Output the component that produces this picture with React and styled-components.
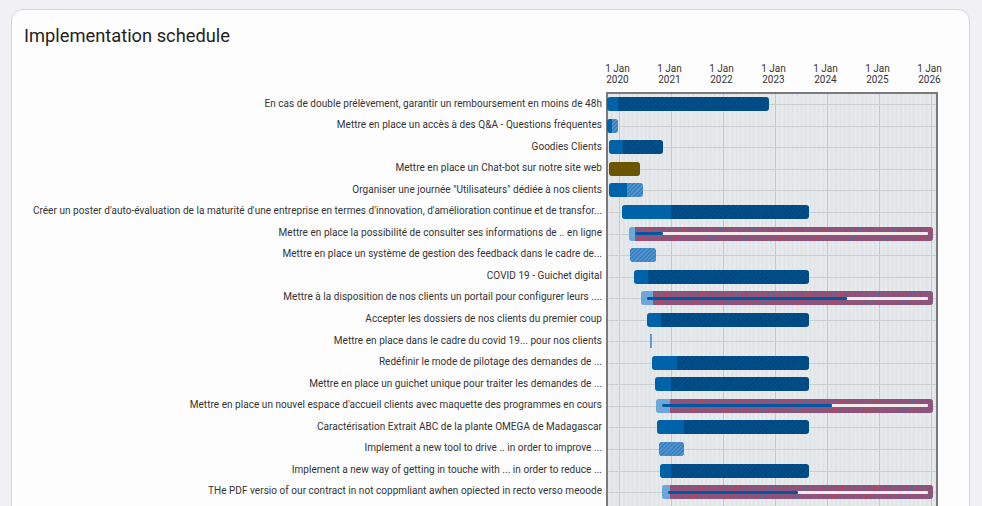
import React from 'react';
import styled, { createGlobalStyle } from 'styled-components';

const ROW_H = 21.55;
const PLOT_X = 608; // page x of the plot's inner left edge

const years = [2020, 2021, 2022, 2023, 2024, 2025, 2026];
const yearX = (i) => 10.5 + 52 * i;

// positions are page x coordinates of the bar parts
const tasks = [
  { label: 'En cas de double prélèvement, garantir un remboursement en moins de 48h', kind: 'blue', start: 607, split: 618.3, end: 769 },
  { label: 'Mettre en place un accès à des Q&A - Questions fréquentes', kind: 'blueLight', start: 607.3, split: 612.3, end: 617.7 },
  { label: 'Goodies Clients', kind: 'blue', start: 608.7, split: 622.7, end: 662.7 },
  { label: 'Mettre en place un Chat-bot sur notre site web', kind: 'olive', start: 608.7, end: 640.3 },
  { label: 'Organiser une journée "Utilisateurs" dédiée à nos clients', kind: 'blueLight', start: 609.3, split: 626.7, end: 643.3 },
  { label: "Créer un poster d'auto-évaluation de la maturité d'une entreprise en termes d'innovation, d'amélioration continue et de transfor...", kind: 'blue', start: 622, split: 670.7, end: 809.3 },
  { label: 'Mettre en place la possibilité de consulter ses informations de .. en ligne', kind: 'late', start: 628.7, split: 635, end: 933, progFrom: 635, progTo: 663.3, progEnd: 928 },
  { label: 'Mettre en place un système de gestion des feedback dans le cadre de...', kind: 'light', start: 630, end: 655.7 },
  { label: 'COVID 19 - Guichet digital', kind: 'blue', start: 634, split: 648, end: 809.3 },
  { label: 'Mettre à la disposition de nos clients un portail pour configurer leurs ....', kind: 'late', start: 640.7, split: 653.3, end: 933, progFrom: 646.7, progTo: 846.7, progEnd: 928.3 },
  { label: 'Accepter les dossiers de nos clients du premier coup', kind: 'blue', start: 647, split: 660.7, end: 809.3 },
  { label: 'Mettre en place dans le cadre du covid 19... pour nos clients', kind: 'mark', start: 650 },
  { label: 'Redéfinir le mode de pilotage des demandes de ...', kind: 'blue', start: 651.7, split: 677.3, end: 809.3 },
  { label: 'Mettre en place un guichet unique pour traiter les demandes de ...', kind: 'blue', start: 655, split: 670.7, end: 809.3 },
  { label: "Mettre en place un nouvel espace d'accueil clients avec maquette des programmes en cours", kind: 'late', start: 656, split: 670, end: 933, progFrom: 661.7, progTo: 832.3, progEnd: 928.3 },
  { label: 'Caractérisation Extrait ABC de la plante OMEGA de Madagascar', kind: 'blue', start: 657.3, split: 683.7, end: 809.3 },
  { label: 'Implement a new tool to drive .. in order to improve ...', kind: 'light', start: 659, end: 684.3 },
  { label: 'Implement a new way of getting in touche with ... in order to reduce ...', kind: 'blue', start: 660.3, split: 670.7, end: 809.3 },
  { label: 'THe PDF versio of our contract in not coppmliant awhen opiected in recto verso meoode', kind: 'late', start: 662, split: 670, end: 933, progFrom: 668.3, progTo: 798.3, progEnd: 928.3 },
];

const GlobalStyle = createGlobalStyle`
  body {
    margin: 0;
    background: #f1f1f4;
    font-family: Roboto, "Liberation Sans", sans-serif;
  }
`;

const Page = styled.div`
  height: 506px;
  overflow: hidden;
  padding: 9px 12px 0 11px;
  box-sizing: border-box;
`;

const Card = styled.section`
  background: #fdfdfe;
  border: 1px solid #d5d5da;
  border-radius: 12px;
  padding: 14px 31px 0 12px;
  height: 520px;
  box-sizing: border-box;
`;

const Title = styled.h2`
  margin: 0;
  font-size: 18.3px;
  font-weight: 400;
  line-height: 24px;
  color: #231f1c;
`;

const Chart = styled.div`
  display: grid;
  grid-template-columns: 578px 332px;
  column-gap: 4px;
  margin-top: 15px;
`;

const Axis = styled.div`
  grid-column: 2;
  position: relative;
  height: 22px;
  margin-bottom: 6.5px;
  margin-left: 2px;
`;

const Tick = styled.div`
  position: absolute;
  top: 0;
  transform: translateX(-50%);
  font-size: 10px;
  line-height: 11px;
  text-align: center;
  color: #333;
  white-space: nowrap;
`;

const Labels = styled.div`
  display: flex;
  flex-direction: column;
  padding-top: 1px;
`;

const Label = styled.div`
  height: ${ROW_H}px;
  line-height: ${ROW_H}px;
  font-size: 10px;
  letter-spacing: 0.04px;
  color: #333;
  text-align: right;
  white-space: nowrap;
  overflow: hidden;
`;

const Plot = styled.div`
  position: relative;
  border: 2px solid #7a7a7a;
  border-bottom: none;
  padding-bottom: 12px;
  background-color: #e3e7e9;
  background-image: repeating-linear-gradient(
    90deg,
    #e0e4e6 0 2.2px,
    #e7ebed 2.2px 4.33px
  );
  background-position: 10.5px 0;
`;

const YearLine = styled.div`
  position: absolute;
  top: 0;
  bottom: 0;
  width: 1px;
  background: #c4c9cc;
`;

const TodayLine = styled.div`
  position: absolute;
  top: 0;
  bottom: 0;
  width: 2px;
  background: #7b8d99;
  z-index: 2;
`;

const Row = styled.div`
  position: relative;
  height: ${ROW_H}px;

  &::before {
    content: '';
    position: absolute;
    left: 0;
    right: 0;
    top: 50%;
    height: 1px;
    background: #cacfd2;
  }
`;

const Bar = styled.div`
  position: absolute;
  top: 50%;
  height: 14px;
  margin-top: -7px;
  display: flex;
  border-radius: 3px;
  overflow: hidden;
  box-shadow: inset 0 0 0 1px rgba(130, 175, 215, 0.35);
  z-index: 1;
`;

const segmentFill = {
  solid: '#0063a9',
  dark: 'repeating-linear-gradient(135deg, #00518e 0 1.5px, #00457b 1.5px 3px)',
  light: 'repeating-linear-gradient(135deg, #4d93d0 0 1.5px, #3a80bf 1.5px 3px)',
  pale: '#6ba8d9',
  red: 'repeating-linear-gradient(135deg, #c43f58 0 1.5px, #56689c 1.5px 3px)',
  olive: '#6b5500',
};

const Segment = styled.div`
  height: 100%;
  flex: ${(p) => (p.$grow ? '1 1 auto' : '0 0 auto')};
  background: ${(p) => segmentFill[p.$fill]};
`;

const Progress = styled.div`
  position: absolute;
  top: 50%;
  height: 3px;
  margin-top: -1.5px;
  display: flex;
  background: #f6ecee;
  border-radius: 1px;
  z-index: 2;
`;

const ProgressDone = styled.div`
  height: 100%;
  background: #0057a1;
  border-radius: 1px;
`;

const Marker = styled.div`
  position: absolute;
  top: 50%;
  width: 2px;
  height: 14px;
  margin-top: -7px;
  background: #5f9cd2;
  z-index: 1;
`;

function TaskBar({ task }) {
  const left = task.start - PLOT_X;

  if (task.kind === 'mark') {
    return <Marker style={{ left }} />;
  }

  const width = task.end - task.start;
  const first = task.split ? task.split - task.start : 0;

  let parts;
  if (task.kind === 'blue') {
    parts = [['solid', first], ['dark']];
  } else if (task.kind === 'blueLight') {
    parts = [['solid', first], ['light']];
  } else if (task.kind === 'light') {
    parts = [['light']];
  } else if (task.kind === 'olive') {
    parts = [['olive']];
  } else {
    parts = [['pale', first], ['red']];
  }

  return (
    <>
      <Bar style={{ left, width }}>
        {parts.map(([fill, w], i) =>
          w ? (
            <Segment key={i} $fill={fill} style={{ width: w }} />
          ) : (
            <Segment key={i} $fill={fill} $grow />
          )
        )}
      </Bar>
      {task.kind === 'late' && (
        <Progress
          style={{
            left: task.progFrom - PLOT_X,
            width: task.progEnd - task.progFrom,
          }}
        >
          <ProgressDone style={{ width: task.progTo - task.progFrom }} />
        </Progress>
      )}
    </>
  );
}

export default function App() {
  return (
    <>
      <GlobalStyle />
      <Page>
        <Card>
          <Title>Implementation schedule</Title>
          <Chart>
            <Axis>
              {years.map((y, i) => (
                <Tick key={y} style={{ left: yearX(i) - 1 }}>
                  1 Jan
                  <br />
                  {y}
                </Tick>
              ))}
            </Axis>
            <Labels>
              {tasks.map((t) => (
                <Label key={t.label}>{t.label}</Label>
              ))}
            </Labels>
            <Plot>
              {years.map((y, i) => (
                <YearLine key={y} style={{ left: yearX(i) }} />
              ))}
              <TodayLine style={{ left: 924.7 }} />
              {tasks.map((t) => (
                <Row key={t.label}>
                  <TaskBar task={t} />
                </Row>
              ))}
            </Plot>
          </Chart>
        </Card>
      </Page>
    </>
  );
}
